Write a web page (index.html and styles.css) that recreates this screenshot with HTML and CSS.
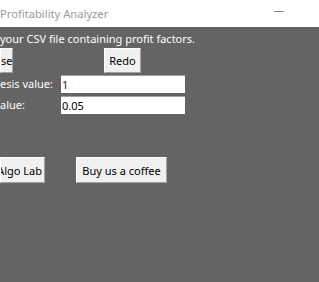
FILE: index.html
```html
<!DOCTYPE html>
<html lang="en">
  <head>
    <meta charset="UTF-8" />
    <title>Profitability Analyzer</title>
    <link rel="stylesheet" href="styles.css">
  </head>
  <body>
    <div class="titlebar">
      <span class="title">Profitability Analyzer</span>
      <span class="minimize"></span>
    </div>

    <div class="main">
      <p class="intro">your CSV file containing profit factors.</p>

      <div class="row buttons">
        <button class="btn btn-browse">se</button>
        <button class="btn btn-redo">Redo</button>
      </div>

      <div class="row field">
        <label for="hyp">esis value:</label>
        <input type="text" id="hyp" class="entry entry-purple" value="1" />
      </div>
      <div class="row field">
        <label for="alpha">alue:</label>
        <input type="text" id="alpha" class="entry" value="0.05" />
      </div>

      <div class="row links">
        <button class="btn btn-lab">Algo Lab</button>
        <button class="btn btn-coffee">Buy us a coffee</button>
      </div>
    </div>
  </body>
</html>
```

FILE: styles.css
```css
html,
body {
  margin: 0;
  height: 100%;
}
body {
  font-family: "Noto Sans", "Open Sans", sans-serif;
  font-size: 11px;
  background-color: #646464;
  overflow: hidden;
}
.titlebar {
  height: 27px;
  background-color: #fff;
  display: flex;
  align-items: center;
  justify-content: space-between;
}
.title {
  color: #9a9a9a;
  font-size: 11.2px;
  margin-top: -1px;
}
.minimize {
  width: 10px;
  height: 1px;
  background-color: #8c8c8c;
  margin-right: 35px;
  margin-top: -4px;
}
.main {
  color: #fff;
}
.intro {
  margin: 3px 0 0 0;
  height: 17px;
  line-height: 17px;
}
.row {
  display: flex;
  align-items: center;
}
.btn {
  font-family: inherit;
  font-size: 11px;
  color: #000;
  background-color: #f0f0f0;
  border: 1px solid;
  border-color: #fff #a0a0a0 #a0a0a0 #fff;
  box-shadow: 1px 1px 0 #696969;
  height: 25px;
  padding: 0;
  border-radius: 0;
  white-space: nowrap;
}
.buttons {
  margin-top: 1px;
}
.btn-browse {
  width: 13px;
  text-align: right;
  padding-right: 1px;
}
.btn-redo {
  width: 37px;
  margin-left: 91px;
}
.field {
  height: 21px;
  align-items: flex-start;
}
.buttons + .field {
  margin-top: 2px;
}
.field label {
  width: 61px;
  line-height: 18px;
  white-space: nowrap;
}
.entry {
  width: 124px;
  height: 18px;
  box-sizing: border-box;
  border: none;
  border-top: 1px solid #a0a0a0;
  padding: 0 1px;
  font-family: inherit;
  font-size: 11px;
  color: #000;
  background-color: #fff;
}
.entry-purple {
  color: #3a0848;
}
.links {
  margin-top: 40px;
}
.btn-lab {
  width: 45px;
  height: 26px;
  display: flex;
  align-items: center;
  justify-content: flex-end;
  padding-right: 2px;
  overflow: hidden;
}
.btn-coffee {
  margin-left: 31px;
  width: 91px;
  height: 26px;
}
```
